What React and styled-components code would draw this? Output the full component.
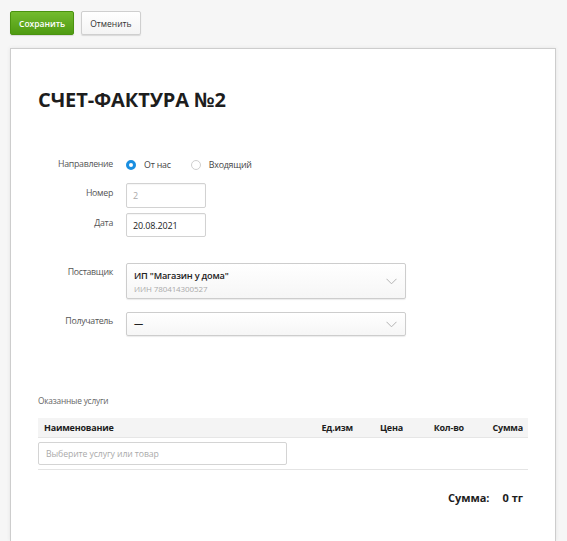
import React from "react";
import styled, { createGlobalStyle } from "styled-components";

const Global = createGlobalStyle`
  html, body { margin: 0; padding: 0; background: #f6f6f6; }
  body { font-family: "Open Sans", "Noto Sans", sans-serif; color: #333; }
  * { box-sizing: border-box; }
`;

const Page = styled.div`
  padding: 11px 11px 0 10px;
  height: 541px;
  overflow: hidden;
  display: flex;
  flex-direction: column;
`;

const Toolbar = styled.div`
  display: flex;
  gap: 7px;
  height: 24px;
`;

const Button = styled.button`
  height: 24px;
  padding: 0 8px;
  font-family: inherit;
  font-size: 8.5px;
  font-weight: ${(p) => (p.$primary ? 600 : 400)};
  border-radius: 2px;
  cursor: pointer;
  color: ${(p) => (p.$primary ? "#fff" : "#333")};
  border: 1px solid ${(p) => (p.$primary ? "#4a920f" : "#cfcfcf")};
  background: ${(p) =>
    p.$primary
      ? "linear-gradient(#73bb2e, #4f9b12)"
      : "linear-gradient(#ffffff, #f4f4f4)"};
  box-shadow: 0 1px 1px rgba(0, 0, 0, 0.12);
`;

const Card = styled.div`
  margin-top: 13px;
  flex: 1;
  background: #fff;
  border: 1px solid #cdcdcd;
  border-bottom: none;
  box-shadow: 0 0 4px rgba(0, 0, 0, 0.08);
  padding: 37px 27px 0 27px;
`;

const Title = styled.h1`
  margin: 0;
  font-size: 20px;
  line-height: 27px;
  font-weight: 700;
  color: #1d1d1d;
  letter-spacing: -0.1px;
`;

const Form = styled.div`
  margin-top: 45px;
  display: grid;
  grid-template-columns: 75px 1fr;
  column-gap: 13px;
  align-items: start;
`;

const Label = styled.div`
  text-align: right;
  font-size: 8.8px;
  letter-spacing: -0.3px;
  color: #555;
  line-height: 13px;
  padding-top: ${(p) => p.$pt || 0}px;
  margin-top: ${(p) => p.$mt || 0}px;
`;

const Field = styled.div`
  margin-top: ${(p) => p.$mt || 0}px;
`;

const RadioGroup = styled.div`
  display: flex;
  align-items: center;
  height: 13px;
  padding-top: 1px;
`;

const RadioItem = styled.label`
  display: flex;
  align-items: center;
  gap: 8px;
  font-size: 8.8px;
  letter-spacing: -0.2px;
  color: #444;
  margin-right: 20px;
`;

const RadioDot = styled.span`
  width: 10px;
  height: 10px;
  border-radius: 50%;
  border: ${(p) => (p.$on ? "3px solid #1a8ee0" : "1px solid #cfcfcf")};
  background: #fff;
`;

const TextInput = styled.div`
  width: 80px;
  height: ${(p) => p.$h || 25}px;
  border: 1px solid #d2d2d2;
  border-radius: 2px;
  padding: 0 6px;
  display: flex;
  align-items: center;
  font-size: 9px;
  letter-spacing: -0.15px;
  color: ${(p) => (p.$muted ? "#aaa" : "#222")};
  box-shadow: inset 0 1px 1px rgba(0, 0, 0, 0.04);
`;

const Select = styled.div`
  width: 280px;
  height: ${(p) => p.$h}px;
  border: 1px solid #cdcdcd;
  border-radius: 2px;
  background: linear-gradient(#ffffff, #f6f6f6);
  box-shadow: 0 1px 1px rgba(0, 0, 0, 0.08);
  display: flex;
  align-items: center;
  justify-content: space-between;
  padding: 0 8px 0 7px;
`;

const SelectText = styled.div`
  display: flex;
  flex-direction: column;
`;

const SelectMain = styled.div`
  font-size: 9.2px;
  font-weight: 600;
  letter-spacing: -0.2px;
  color: #222;
  line-height: 14px;
`;

const SelectSub = styled.div`
  font-size: 8px;
  letter-spacing: -0.1px;
  color: #aaa;
  line-height: 11px;
`;

const Chevron = () => (
  <svg width="11" height="7" viewBox="0 0 11 7">
    <path d="M0.5 0.8 L5.5 5.8 L10.5 0.8" fill="none" stroke="#b3b3b3" strokeWidth="1" />
  </svg>
);

const SectionLabel = styled.div`
  margin-top: 59px;
  font-size: 8.3px;
  letter-spacing: -0.2px;
  color: #666;
  line-height: 12px;
`;

const Table = styled.div`
  margin-top: 11px;
  width: 490px;
`;

const HeadRow = styled.div`
  display: grid;
  grid-template-columns: 1fr 60px 50px 61px 59px;
  height: 20px;
  align-items: center;
  background: #f4f4f4;
  border-bottom: 1px solid #e6e6e6;
  padding: 0 5px 0 6px;
`;

const HeadCell = styled.div`
  font-size: 9px;
  font-weight: 700;
  letter-spacing: -0.2px;
  color: #1d1d1d;
  text-align: ${(p) => (p.$left ? "left" : "right")};
`;

const BodyRow = styled.div`
  padding: 4px 0 4px 0;
  border-bottom: 1px solid #e4e4e4;
`;

const ItemInput = styled.div`
  width: 249px;
  height: 23px;
  border: 1px solid #d4d4d4;
  border-radius: 2px;
  display: flex;
  align-items: center;
  padding: 0 7px;
  font-size: 8.7px;
  letter-spacing: -0.1px;
  color: #aaa;
`;

const Total = styled.div`
  margin-top: 20px;
  width: 490px;
  display: flex;
  justify-content: flex-end;
  gap: 13px;
  padding-right: 5px;
  font-size: 11px;
  font-weight: 700;
  color: #1d1d1d;
`;

export default function App() {
  return (
    <>
      <Global />
      <Page>
        <Toolbar>
          <Button $primary>Сохранить</Button>
          <Button>Отменить</Button>
        </Toolbar>
        <Card>
          <Title>СЧЕТ-ФАКТУРА №2</Title>
          <Form>
            <Label>Направление</Label>
            <Field>
              <RadioGroup>
                <RadioItem>
                  <RadioDot $on />
                  От нас
                </RadioItem>
                <RadioItem>
                  <RadioDot />
                  Входящий
                </RadioItem>
              </RadioGroup>
            </Field>

            <Label $mt={12} $pt={4}>Номер</Label>
            <Field $mt={12}>
              <TextInput $muted>2</TextInput>
            </Field>

            <Label $mt={5} $pt={4}>Дата</Label>
            <Field $mt={5}>
              <TextInput $h={24}>20.08.2021</TextInput>
            </Field>

            <Label $mt={26} $pt={3}>Поставщик</Label>
            <Field $mt={26}>
              <Select $h={36}>
                <SelectText>
                  <SelectMain>ИП "Магазин у дома"</SelectMain>
                  <SelectSub>ИИН 780414300527</SelectSub>
                </SelectText>
                <Chevron />
              </Select>
            </Field>

            <Label $mt={13} $pt={3}>Получатель</Label>
            <Field $mt={13}>
              <Select $h={24}>
                <SelectMain>—</SelectMain>
                <Chevron />
              </Select>
            </Field>
          </Form>

          <SectionLabel>Оказанные услуги</SectionLabel>
          <Table>
            <HeadRow>
              <HeadCell $left>Наименование</HeadCell>
              <HeadCell>Ед.изм</HeadCell>
              <HeadCell>Цена</HeadCell>
              <HeadCell>Кол-во</HeadCell>
              <HeadCell>Сумма</HeadCell>
            </HeadRow>
            <BodyRow>
              <ItemInput>Выберите услугу или товар</ItemInput>
            </BodyRow>
          </Table>
          <Total>
            <span>Сумма:</span>
            <span>0 тг</span>
          </Total>
        </Card>
      </Page>
    </>
  );
}
